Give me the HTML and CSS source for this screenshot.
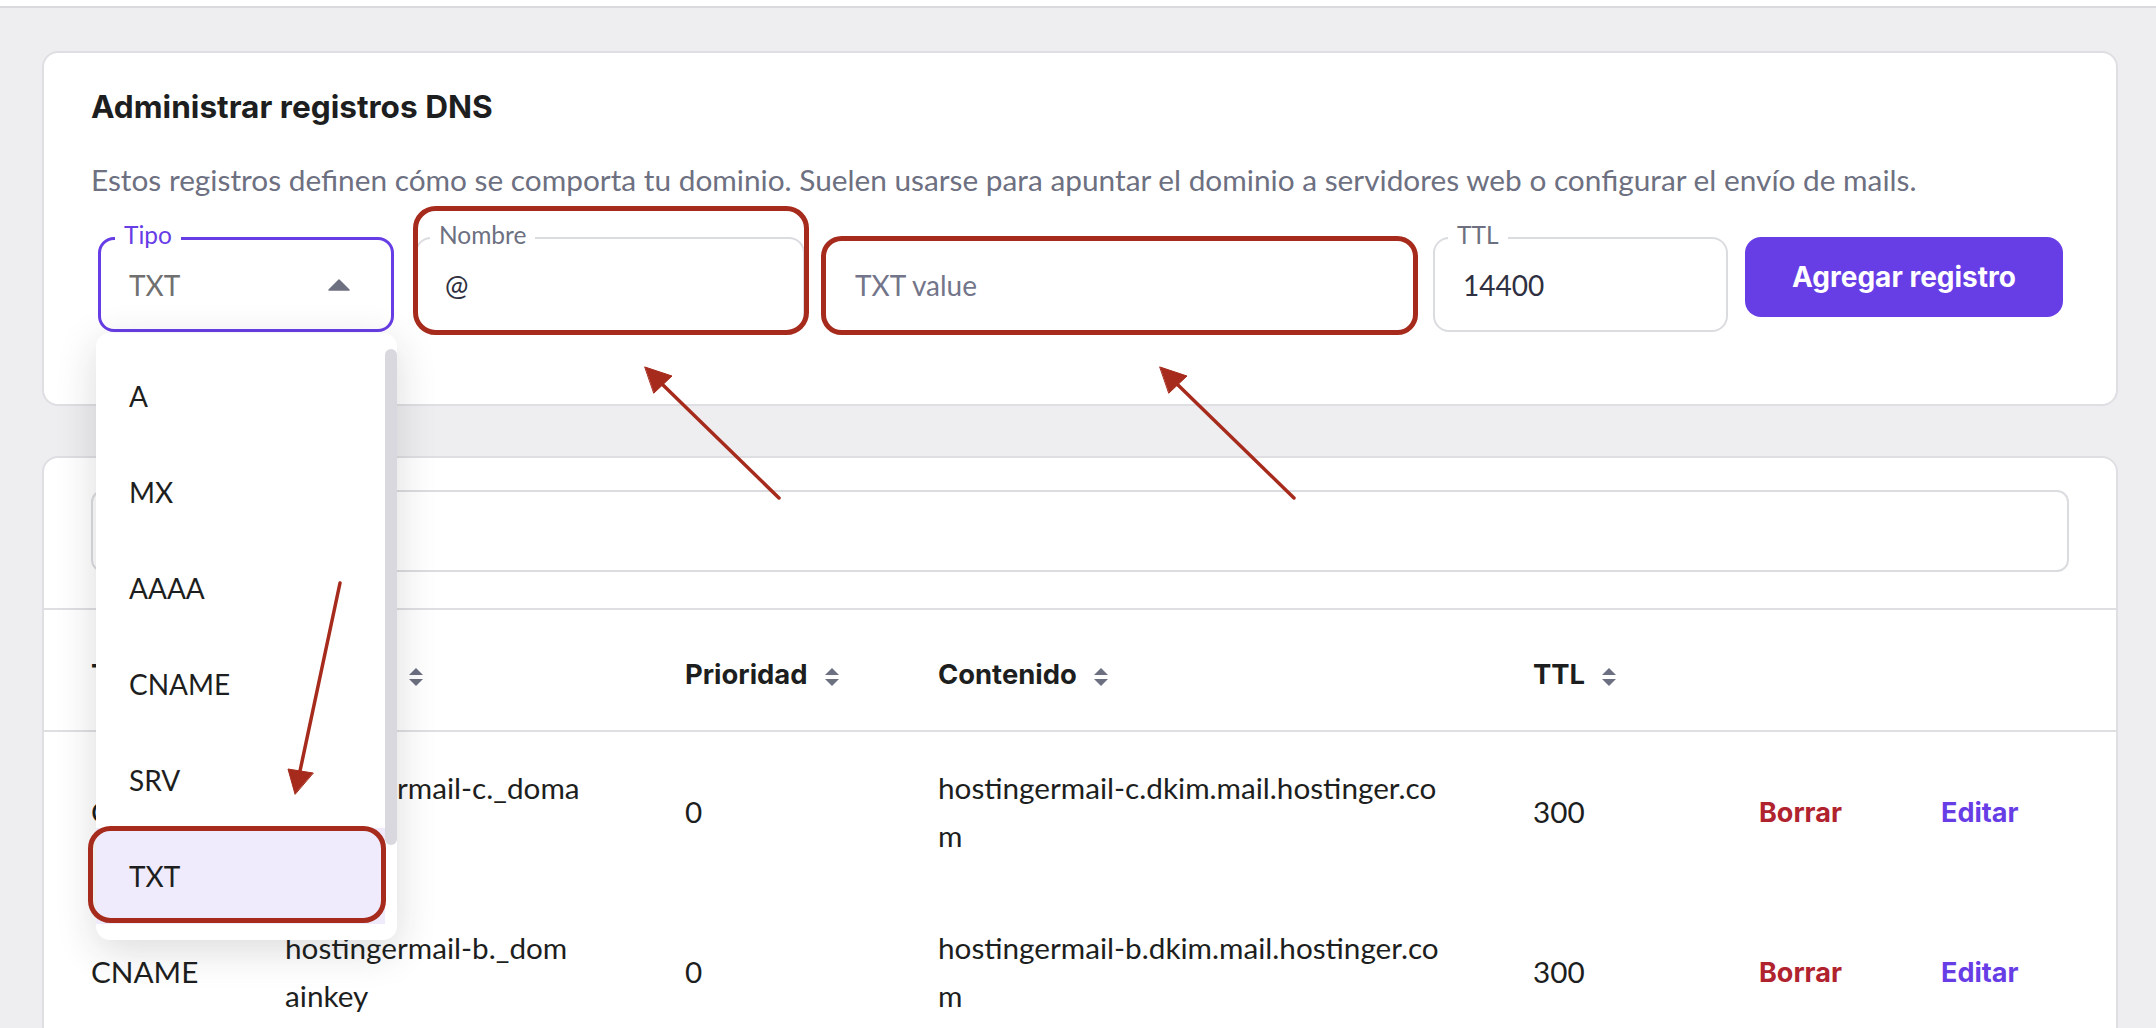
FILE: index.html
```html
<!DOCTYPE html>
<html lang="es">
<head>
<meta charset="utf-8">
<title>Administrar registros DNS</title>
<link rel="stylesheet" href="styles.css">
</head>
<body>
<header class="topbar"></header>
<main class="page">
  <section class="card card-form">
    <h2 class="card-title">Administrar registros DNS</h2>
    <p class="card-desc">Estos registros definen cómo se comporta tu dominio. Suelen usarse para apuntar el dominio a servidores web o configurar el envío de mails.</p>
    <form class="record-form">
      <div class="field field-type">
        <span class="field-label">Tipo</span>
        <span class="field-value is-muted">TXT</span>
        <svg class="field-caret" viewBox="0 0 22 12" width="22" height="12" aria-hidden="true"><polygon points="11,1 21,11 1,11" fill="#6d7081" stroke="#6d7081" stroke-width="1.5" stroke-linejoin="round"/></svg>
        <div class="type-menu">
          <ul class="type-list">
            <li class="type-item">A</li>
            <li class="type-item">MX</li>
            <li class="type-item">AAAA</li>
            <li class="type-item">CNAME</li>
            <li class="type-item">SRV</li>
            <li class="type-item is-selected">TXT</li>
          </ul>
          <span class="menu-thumb"></span>
        </div>
      </div>
      <div class="field field-name">
        <span class="field-label">Nombre</span>
        <span class="field-value">@</span>
      </div>
      <div class="field field-content">
        <span class="field-value is-placeholder">TXT value</span>
      </div>
      <div class="field field-ttl">
        <span class="field-label">TTL</span>
        <span class="field-value">14400</span>
      </div>
      <button type="button" class="btn-primary">Agregar registro</button>
    </form>
  </section>

  <section class="card card-table">
    <div class="search-box"></div>
    <table class="records">
      <colgroup>
        <col class="col-type"><col class="col-name"><col class="col-prio"><col class="col-content"><col class="col-ttl"><col class="col-del"><col class="col-edit">
      </colgroup>
      <thead>
        <tr>
          <th>Tipo<svg class="sort" viewBox="0 0 16 20" width="16" height="20" aria-hidden="true"><polygon points="8,1 15,8 1,8"/><polygon points="1,12 15,12 8,19"/></svg></th>
          <th>Nombre<svg class="sort" viewBox="0 0 16 20" width="16" height="20" aria-hidden="true"><polygon points="8,1 15,8 1,8"/><polygon points="1,12 15,12 8,19"/></svg></th>
          <th>Prioridad<svg class="sort" viewBox="0 0 16 20" width="16" height="20" aria-hidden="true"><polygon points="8,1 15,8 1,8"/><polygon points="1,12 15,12 8,19"/></svg></th>
          <th>Contenido<svg class="sort" viewBox="0 0 16 20" width="16" height="20" aria-hidden="true"><polygon points="8,1 15,8 1,8"/><polygon points="1,12 15,12 8,19"/></svg></th>
          <th>TTL<svg class="sort" viewBox="0 0 16 20" width="16" height="20" aria-hidden="true"><polygon points="8,1 15,8 1,8"/><polygon points="1,12 15,12 8,19"/></svg></th>
          <th></th>
          <th></th>
        </tr>
      </thead>
      <tbody>
        <tr>
          <td>CNAME</td>
          <td>hostingermail-c._doma<br>inkey</td>
          <td>0</td>
          <td>hostingermail-c.dkim.mail.hostinger.co<br>m</td>
          <td>300</td>
          <td><a class="link link-danger">Borrar</a></td>
          <td><a class="link link-primary">Editar</a></td>
        </tr>
        <tr>
          <td>CNAME</td>
          <td>hostingermail-b._dom<br>ainkey</td>
          <td>0</td>
          <td>hostingermail-b.dkim.mail.hostinger.co<br>m</td>
          <td>300</td>
          <td><a class="link link-danger">Borrar</a></td>
          <td><a class="link link-primary">Editar</a></td>
        </tr>
      </tbody>
    </table>
  </section>
</main>

<svg class="annotations" viewBox="0 0 2156 1028" width="2156" height="1028" aria-hidden="true">
  <g fill="none" stroke="#a62b1c" stroke-width="5">
    <rect x="415.5" y="208.5" width="391" height="124" rx="20"/>
    <rect x="823.5" y="238.5" width="592" height="94" rx="18"/>
    <rect x="90.5" y="828.5" width="293" height="92" rx="20"/>
  </g>
  <g stroke="#a62b1c" stroke-width="3.5" stroke-linecap="round" fill="#a62b1c">
    <line x1="779" y1="498" x2="663" y2="385"/>
    <polygon points="645,367 672,376 654,393" stroke-width="1"/>
    <line x1="1294" y1="498" x2="1178" y2="385"/>
    <polygon points="1160,367 1187,376 1169,393" stroke-width="1"/>
    <line x1="340" y1="583" x2="300" y2="771"/>
    <polygon points="295,794 288,769 313,773" stroke-width="1"/>
  </g>
</svg>
</body>
</html>
```

FILE: styles.css
```css
* {
  box-sizing: border-box;
}

html,
body {
  margin: 0;
  padding: 0;
}

body {
  position: relative;
  width: 2156px;
  height: 1028px;
  overflow: hidden;
  background: #eeeef1;
  font-family: Lato, "Noto Sans", sans-serif;
  color: #1d1e20;
}

.topbar {
  height: 8px;
  background: #ffffff;
  border-bottom: 2px solid #dadade;
}

.page {
  display: flex;
  flex-direction: column;
  gap: 50px;
  padding: 43px 38px 0 42px;
}

.card {
  background: #ffffff;
  border: 2px solid #dedee3;
  border-radius: 16px;
}

/* ---------- Form card ---------- */

.card-form {
  padding: 34px 47px 72px 47px;
}

.card-title {
  margin: 0;
  font-family: Inter, Lato, sans-serif;
  font-size: 31.6px;
  line-height: 40px;
  font-weight: 700;
  color: #1d1e20;
}

.card-desc {
  margin: 31px 0 0;
  font-size: 29.8px;
  line-height: 44px;
  color: #6d7081;
}

.record-form {
  display: flex;
  align-items: flex-start;
  gap: 17px;
  margin: 35px 0 0 7px;
}

.field {
  position: relative;
  display: flex;
  align-items: center;
  height: 95px;
  padding: 0 28px;
  border: 2px solid #dadce0;
  border-radius: 16px;
  background: #ffffff;
}

.field-type {
  width: 296px;
  margin-right: 4px;
  padding-right: 41px;
  border: 3px solid #673de6;
}

.field-name {
  width: 390px;
}

.field-content {
  width: 594px;
  padding-left: 31px;
}

.field-ttl {
  width: 295px;
}

.field-label {
  position: absolute;
  top: -16px;
  left: 13px;
  padding: 0 9px;
  background: #ffffff;
  font-size: 24.5px;
  line-height: 24px;
  color: #6d7081;
}

.field-type .field-label {
  top: -17px;
  left: 14px;
  color: #673de6;
}

.field-value {
  font-size: 28px;
  line-height: 40px;
  color: #2f3041;
}

.field-value.is-muted {
  color: #707070;
}

.field-value.is-placeholder {
  color: #73758a;
}

.field-caret {
  display: block;
  margin-left: auto;
}

.btn-primary {
  width: 318px;
  height: 80px;
  border: 0;
  border-radius: 16px;
  background: #673de6;
  color: #ffffff;
  font-family: Inter, Lato, sans-serif;
  font-size: 28px;
  font-weight: 700;
}

/* ---------- Type dropdown ---------- */

.type-menu {
  position: absolute;
  top: 93px;
  left: -5px;
  z-index: 5;
  width: 301px;
  padding: 15px 12px 16px 0;
  background: #ffffff;
  border-radius: 14px;
  box-shadow: 0 10px 40px rgba(29, 30, 32, 0.16);
}

.type-list {
  margin: 0;
  padding: 0;
  list-style: none;
}

.type-item {
  display: flex;
  align-items: center;
  height: 96px;
  padding-left: 33px;
  font-size: 28px;
  color: #1d1e20;
}

.type-item.is-selected {
  background: #efebfd;
}

.menu-thumb {
  position: absolute;
  top: 16px;
  right: 0;
  width: 12px;
  height: 496px;
  border-radius: 6px;
  background: #d8d8de;
}

/* ---------- Table card ---------- */

.card-table {
  padding-top: 32px;
  min-height: 700px;
}

.search-box {
  height: 82px;
  margin: 0 47px;
  border: 2px solid #dadce0;
  border-radius: 12px;
}

.records {
  width: 100%;
  margin-top: 36px;
  table-layout: fixed;
  border-collapse: separate;
  border-spacing: 0;
}

.col-type { width: 241px; }
.col-name { width: 400px; }
.col-prio { width: 253px; }
.col-content { width: 595px; }
.col-ttl { width: 226px; }
.col-del { width: 182px; }
.col-edit { width: 175px; }

.records th,
.records td {
  padding: 0;
  text-align: left;
  font-size: 29.7px;
  line-height: 48px;
  vertical-align: middle;
}

.records th {
  padding-top: 40px;
  padding-bottom: 32px;
  font-family: Inter, Lato, sans-serif;
  font-size: 27.4px;
  font-weight: 700;
  color: #1d1e20;
  border-top: 2px solid #dedee3;
  border-bottom: 2px solid #dedee3;
  white-space: nowrap;
}

.records td {
  padding-top: 32px;
  padding-bottom: 32px;
  color: #1d1e20;
}

.records th:first-child,
.records td:first-child {
  padding-left: 47px;
}

.sort {
  display: inline-block;
  margin-left: 16px;
  vertical-align: middle;
  fill: #6d7081;
}

.link {
  font-family: Inter, Lato, sans-serif;
  font-size: 27px;
  font-weight: 700;
  text-decoration: none;
}

.link-danger {
  color: #b0222e;
}

.link-primary {
  color: #673de6;
}

/* ---------- Annotation overlay ---------- */

.annotations {
  position: absolute;
  top: 0;
  left: 0;
  z-index: 10;
  pointer-events: none;
}
```
